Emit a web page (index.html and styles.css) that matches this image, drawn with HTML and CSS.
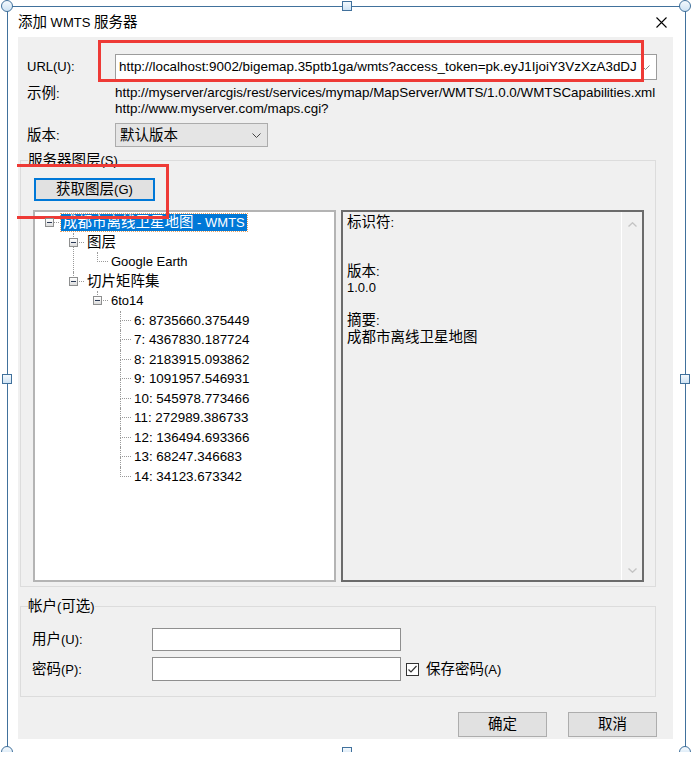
FILE: index.html
```html
<!DOCTYPE html>
<html lang="zh-CN">
<head>
  <meta charset="UTF-8">
  <title>添加 WMTS 服务器</title>
  <link rel="stylesheet" href="styles.css">
</head>
<body>
  <div class="dialog">
    <div class="titlebar">
      <span class="title"><span class="zh">添加</span> WMTS <span class="zh">服务器</span></span>
      <svg class="close" width="11" height="11" viewBox="0 0 11 11"><path d="M0.5 0.5L10.5 10.5M10.5 0.5L0.5 10.5" stroke="#000" stroke-width="1.1" fill="none"/></svg>
    </div>

    <div class="client">
      <div class="row url-row">
        <label class="lbl">URL(U):</label>
        <div class="combo url-combo">
          <span class="combo-text">http://localhost:9002/bigemap.35ptb1ga/wmts?access_token=pk.eyJ1IjoiY3VzXzA3dDJ</span>
          <svg class="chev" width="9" height="5" viewBox="0 0 9 5"><polyline points="0.5,0.5 4.5,4.5 8.5,0.5" stroke="#8a8a8a" fill="none"/></svg>
        </div>
      </div>

      <div class="row sample-row">
        <label class="lbl"><span class="zh">示例</span>:</label>
        <div class="samples">
          <div>http://myserver/arcgis/rest/services/mymap/MapServer/WMTS/1.0.0/WMTSCapabilities.xml</div>
          <div>http://www.myserver.com/maps.cgi?</div>
        </div>
      </div>

      <div class="row version-row">
        <label class="lbl"><span class="zh">版本</span>:</label>
        <div class="combo version-combo">
          <span class="zh">默认版本</span>
          <svg class="chev" width="9" height="5" viewBox="0 0 9 5"><polyline points="0.5,0.5 4.5,4.5 8.5,0.5" stroke="#444" fill="none"/></svg>
        </div>
      </div>

      <fieldset class="group layers">
        <legend><span class="zh">服务器图层</span>(S)</legend>
        <button class="btn btn-focus"><span class="zh">获取图层</span>(G)</button>
        <div class="panes">
          <div class="tree">
            <ul class="tv">
              <li class="root">
                <div class="node"><span class="tw"><i class="exp"></i></span><span class="txt sel"><span class="zh">成都市离线卫星地图</span> - WMTS</span></div>
                <ul>
                  <li>
                    <div class="node"><span class="tw"><i class="exp"></i></span><span class="txt zh">图层</span></div>
                    <ul>
                      <li><div class="node"><span class="tw"></span><span class="txt">Google Earth</span></div></li>
                    </ul>
                  </li>
                  <li>
                    <div class="node"><span class="tw"><i class="exp"></i></span><span class="txt zh">切片矩阵集</span></div>
                    <ul>
                      <li>
                        <div class="node"><span class="tw"><i class="exp"></i></span><span class="txt">6to14</span></div>
                        <ul class="leaves">
                          <li><div class="node"><span class="tw"></span><span class="txt">6: 8735660.375449</span></div></li>
                          <li><div class="node"><span class="tw"></span><span class="txt">7: 4367830.187724</span></div></li>
                          <li><div class="node"><span class="tw"></span><span class="txt">8: 2183915.093862</span></div></li>
                          <li><div class="node"><span class="tw"></span><span class="txt">9: 1091957.546931</span></div></li>
                          <li><div class="node"><span class="tw"></span><span class="txt">10: 545978.773466</span></div></li>
                          <li><div class="node"><span class="tw"></span><span class="txt">11: 272989.386733</span></div></li>
                          <li><div class="node"><span class="tw"></span><span class="txt">12: 136494.693366</span></div></li>
                          <li><div class="node"><span class="tw"></span><span class="txt">13: 68247.346683</span></div></li>
                          <li><div class="node"><span class="tw"></span><span class="txt">14: 34123.673342</span></div></li>
                        </ul>
                      </li>
                    </ul>
                  </li>
                </ul>
              </li>
            </ul>
          </div>

          <div class="info">
            <div class="info-body">
              <div class="info-item"><div><span class="zh">标识符</span>:</div><div class="val"></div></div>
              <div class="info-item"><div><span class="zh">版本</span>:</div><div class="val">1.0.0</div></div>
              <div class="info-item"><div><span class="zh">摘要</span>:</div><div class="val zh">成都市离线卫星地图</div></div>
            </div>
            <div class="scroll">
              <svg width="9" height="5" viewBox="0 0 9 5"><polyline points="0.5,4.5 4.5,0.8 8.5,4.5" stroke="#c4c4c4" stroke-width="1.4" fill="none"/></svg>
              <svg width="9" height="5" viewBox="0 0 9 5"><polyline points="0.5,0.5 4.5,4.2 8.5,0.5" stroke="#c4c4c4" stroke-width="1.4" fill="none"/></svg>
            </div>
          </div>
        </div>
      </fieldset>

      <fieldset class="group account">
        <legend><span class="zh">帐户</span>(<span class="zh">可选</span>)</legend>
        <div class="field first">
          <label class="lbl2"><span class="zh">用户</span>(U):</label>
          <div class="input"></div>
        </div>
        <div class="field">
          <label class="lbl2"><span class="zh">密码</span>(P):</label>
          <div class="input tall"></div>
          <div class="check">
            <svg width="13" height="13" viewBox="0 0 13 13"><rect x="0.5" y="0.5" width="12" height="12" fill="#fff" stroke="#333"/><polyline points="2.5,6.5 5,9 10.5,3" stroke="#333" stroke-width="1.2" fill="none"/></svg>
            <span><span class="zh">保存密码</span>(A)</span>
          </div>
        </div>
      </fieldset>

      <div class="actions">
        <button class="btn"><span class="zh">确定</span></button>
        <button class="btn"><span class="zh">取消</span></button>
      </div>
    </div>
  </div>

  <div class="mark mark-url"></div>
  <div class="mark mark-btn"></div>

  <div class="sel-frame">
    <span class="handle round tl"></span>
    <span class="handle round tr"></span>
    <span class="handle round bl"></span>
    <span class="handle round br"></span>
    <span class="handle tm"></span>
    <span class="handle lm"></span>
    <span class="handle rm"></span>
    <span class="handle bm"></span>
  </div>
</body>
</html>
```

FILE: styles.css
```css
body {
  margin: 0;
  background: #fff;
  font-family: "Liberation Sans", "Noto Sans CJK SC", sans-serif;
  font-size: 13px;
  color: #000;
  position: relative;
}

.zh {
  font-size: 14.5px;
}

.dialog {
  width: 676px;
  height: 745px;
  margin: 7px 0 0 8px;
}

.titlebar {
  height: 30px;
  display: flex;
  align-items: center;
  justify-content: space-between;
  padding: 0 17px 0 10px;
  box-sizing: border-box;
  line-height: 16px;
}

.client {
  width: 655px;
  height: 702px;
  margin-left: 10px;
  box-sizing: border-box;
  padding: 16px 16px 0 9px;
  background: #f0f0f0;
  line-height: 16px;
}

.row {
  display: flex;
  align-items: center;
}

.lbl {
  width: 88px;
  flex-shrink: 0;
}

.url-row {
  height: 26px;
  margin-top: 1px;
}

.combo {
  display: flex;
  align-items: center;
  box-sizing: border-box;
  border: 1px solid #a0a0a0;
}

.url-combo {
  width: 542px;
  height: 26px;
  background: #fff;
  border-color: #9c9c9c;
  padding: 0 6px 0 3px;
}

.combo-text {
  flex: 1;
  overflow: hidden;
  white-space: nowrap;
  margin-right: 4px;
  font-size: 13.4px;
}

.sample-row {
  align-items: flex-start;
  margin-top: 5px;
}

.samples {
  font-size: 13.4px;
}

.version-row {
  margin-top: 6px;
}

.version-combo {
  width: 153px;
  height: 24px;
  background: #e5e5e5;
  border-color: #acacac;
  padding: 0 6px 0 4px;
  justify-content: space-between;
}

/* group boxes */
.group {
  margin: 0 0 0 -7px;
  padding: 0;
  width: 636px;
  min-width: 0;
  box-sizing: border-box;
  border: 1px solid #dcdcdc;
}

.group legend {
  margin-left: 7px;
  padding: 0;
  line-height: 16px;
}

.layers {
  margin-top: 5px;
  padding-bottom: 4px;
}

.btn {
  font: inherit;
  line-height: 16px;
  color: #000;
  background: #e1e1e1;
  border: 1px solid #adadad;
  padding: 0;
  box-sizing: border-box;
}

.btn-focus {
  display: block;
  width: 121px;
  height: 23px;
  margin: 9px 0 0 13px;
  border: 2px solid #0078d7;
}

.panes {
  display: flex;
  gap: 5px;
  height: 372px;
  margin: 9px 0 0 12px;
}

.tree {
  width: 303px;
  box-sizing: border-box;
  border: 2px solid #b4b4b4;
  background: #fff;
}

/* tree view */
.tv,
.tv ul {
  list-style: none;
  margin: 0;
  padding: 0;
}

.tv {
  padding: 1px 0 0 5px;
}

.tv ul {
  padding-left: 24px;
}

.tv ul.leaves {
  padding-left: 23px;
}

.tv li {
  position: relative;
}

.tv li::before {
  content: '';
  position: absolute;
  left: 9px;
  top: 0;
  width: 10px;
  height: 9px;
  border-left: 1px dotted #9a9a9a;
  border-bottom: 1px dotted #9a9a9a;
}

.tv li:not(:last-child)::after {
  content: '';
  position: absolute;
  left: 9px;
  top: 10px;
  bottom: 0;
  border-left: 1px dotted #9a9a9a;
}

.tv li.root::before {
  border-left: none;
}

.node {
  display: flex;
  align-items: center;
  height: 19.5px;
}

.tw {
  width: 21px;
  flex-shrink: 0;
  display: flex;
  align-items: center;
  padding-left: 5px;
  box-sizing: border-box;
}

.exp {
  position: relative;
  z-index: 1;
  width: 9px;
  height: 9px;
  box-sizing: border-box;
  border: 1px solid #8e8f8f;
  background:
    linear-gradient(#2b3a55, #2b3a55) center / 5px 1px no-repeat,
    linear-gradient(#fff, #dcdcdc);
}

.txt {
  padding: 0 2px;
  line-height: 17px;
  white-space: nowrap;
}

.leaves .txt {
  font-size: 13.4px;
}

.sel {
  background: #0078d7;
  color: #fff;
  outline: 1px dotted #e8a060;
}

/* info pane */
.info {
  width: 303px;
  box-sizing: border-box;
  border: 2px solid #6b6b6b;
  background: #f0f0f0;
  display: flex;
}

.info-body {
  flex: 1;
  padding: 2px 0 0 4px;
}

.info-item {
  margin-bottom: 16px;
}

.val {
  min-height: 16px;
}

.scroll {
  width: 20px;
  border-left: 1px solid #fff;
  display: flex;
  flex-direction: column;
  justify-content: space-between;
  align-items: center;
  padding: 10px 0 7px;
}

/* account */
.account {
  margin-top: 11px;
  padding-bottom: 15px;
}

.field {
  display: flex;
  align-items: center;
  margin: 6px 0 0 11px;
}

.field.first {
  margin-top: 13px;
}

.lbl2 {
  width: 120px;
  flex-shrink: 0;
}

.input {
  width: 249px;
  height: 23px;
  box-sizing: border-box;
  border: 1px solid #8f8f8f;
  background: #fff;
}

.input.tall {
  height: 24px;
}

.check {
  display: flex;
  align-items: center;
  gap: 7px;
  margin-left: 5px;
}

.actions {
  display: flex;
  justify-content: flex-end;
  gap: 21px;
  margin-top: 15px;
}

.actions .btn {
  width: 89px;
  height: 25px;
}

/* red annotation boxes */
.mark {
  position: absolute;
  box-sizing: border-box;
  border: 3px solid #ee3a36;
}

.mark-url {
  left: 98px;
  top: 40px;
  width: 546px;
  height: 42px;
}

.mark-btn {
  left: 17px;
  top: 164px;
  width: 152px;
  height: 55px;
  border-left: none;
}

/* selection frame with handles */
.sel-frame {
  position: absolute;
  left: 7px;
  top: 6px;
  width: 677px;
  height: 745px;
  border: 1px solid #41719c;
}

.handle {
  position: absolute;
  width: 8px;
  height: 8px;
  border: 1px solid #41719c;
  background: linear-gradient(#f4f9fd, #cfe3f4);
}

.handle.round {
  width: 10px;
  height: 10px;
  border-radius: 50%;
}

.tl { left: -7px; top: -7px; }
.tr { right: -6px; top: -7px; }
.bl { left: -7px; bottom: -6px; }
.br { right: -6px; bottom: -6px; }
.tm { left: calc(50% - 5px); top: -6px; }
.bm { left: calc(50% - 5px); bottom: -5px; }
.lm { left: -6px; top: calc(50% - 6px); }
.rm { right: -5px; top: calc(50% - 6px); }
```
